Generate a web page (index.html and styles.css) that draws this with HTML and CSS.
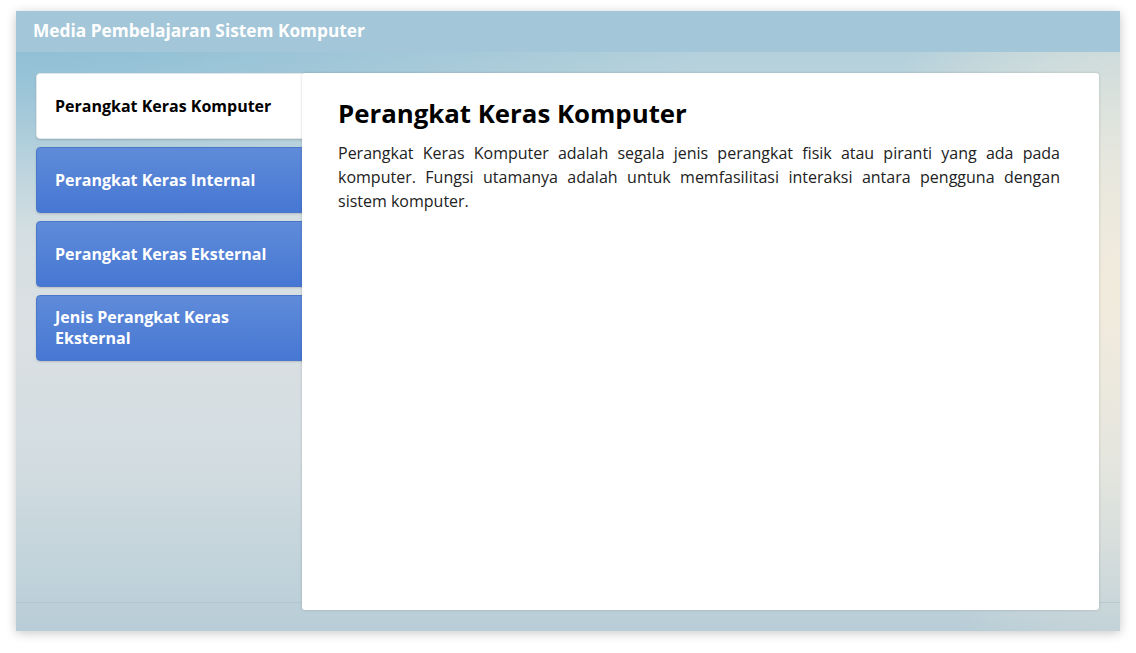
FILE: index.html
```html
<!DOCTYPE html>
<html lang="id">
<head>
<meta charset="utf-8">
<title>Media Pembelajaran Sistem Komputer</title>
<link rel="stylesheet" href="styles.css">
</head>
<body>
<div class="frame">
  <header class="topbar">Media Pembelajaran Sistem Komputer</header>
  <main class="stage">
    <nav class="tabs">
      <div class="tab active">Perangkat Keras Komputer</div>
      <div class="tab">Perangkat Keras Internal</div>
      <div class="tab">Perangkat Keras Eksternal</div>
      <div class="tab">Jenis Perangkat Keras Eksternal</div>
    </nav>
    <section class="panel">
      <h1 class="panel-title">Perangkat Keras Komputer</h1>
      <p class="panel-text">Perangkat Keras Komputer adalah segala jenis perangkat fisik atau piranti yang ada pada komputer. Fungsi utamanya adalah untuk memfasilitasi interaksi antara pengguna dengan sistem komputer.</p>
    </section>
  </main>
</div>
</body>
</html>
```
FILE: styles.css
```css
html, body {
  margin: 0;
  padding: 0;
  background: #ffffff;
}
body {
  font-family: "Open Sans", "Liberation Sans", sans-serif;
  width: 1136px;
  height: 653px;
  overflow: hidden;
}
.frame {
  margin: 11px 0 0 16px;
  width: 1104px;
  height: 620px;
  display: flex;
  flex-direction: column;
  box-shadow: 0 2px 10px rgba(0, 0, 0, 0.22);
  background:
    linear-gradient(to bottom, transparent 0, transparent calc(100% - 29px), rgba(175, 190, 196, 0.55) calc(100% - 29px), rgba(175, 190, 196, 0.55) calc(100% - 28px), transparent calc(100% - 28px)),
    radial-gradient(ellipse 260px 420px at 100% 45%, rgba(243, 236, 220, 0.95) 0%, rgba(243, 236, 220, 0) 100%),
    radial-gradient(ellipse 700px 220px at 0% 0%, rgba(135, 187, 212, 0.95) 0%, rgba(135, 187, 212, 0) 100%),
    linear-gradient(to bottom, #a9cbd9 0%, #cfdde1 25%, #dbe0e3 50%, #d3dde1 72%, #b8cdd7 100%);
}
.topbar {
  height: 41px;
  flex: 0 0 41px;
  box-sizing: border-box;
  padding: 8px 0 0 17px;
  background: #a3c6d8;
  color: #ffffff;
  font-weight: 700;
  font-size: 17.3px;
  line-height: 23px;
}
.stage {
  flex: 1;
  display: flex;
  padding: 21px 21px 21px 20px;
}
.tabs {
  width: 280px;
  flex: 0 0 280px;
  display: flex;
  flex-direction: column;
  gap: 8px;
  position: relative;
  z-index: 1;
}
.tab {
  height: 66px;
  box-sizing: border-box;
  padding: 0 30px 0 18px;
  display: flex;
  align-items: center;
  border-radius: 4px;
  background: linear-gradient(to bottom, #5f8bd9 0%, #4677d3 100%);
  border: 1px solid #4a77c9;
  color: #ffffff;
  font-weight: 700;
  font-size: 16px;
  line-height: 21px;
  box-shadow: 0 1px 2px rgba(0, 0, 0, 0.15);
}
.tab.active {
  background: #ffffff;
  border-color: #e3e6e8;
  color: #000000;
  position: relative;
  z-index: 3;
}
.panel {
  flex: 1;
  margin-left: -14px;
  position: relative;
  z-index: 2;
  background: #ffffff;
  border-radius: 3px;
  box-shadow: 0 0 3px rgba(0, 0, 0, 0.18);
  padding: 23px 39px 0 36px;
}
.panel-title {
  margin: 0;
  font-size: 25.8px;
  line-height: 34px;
  font-weight: 700;
  color: #000000;
}
.panel-text {
  margin: 11px 0 0;
  font-size: 16px;
  line-height: 24px;
  color: #222222;
  text-align: justify;
}
```
